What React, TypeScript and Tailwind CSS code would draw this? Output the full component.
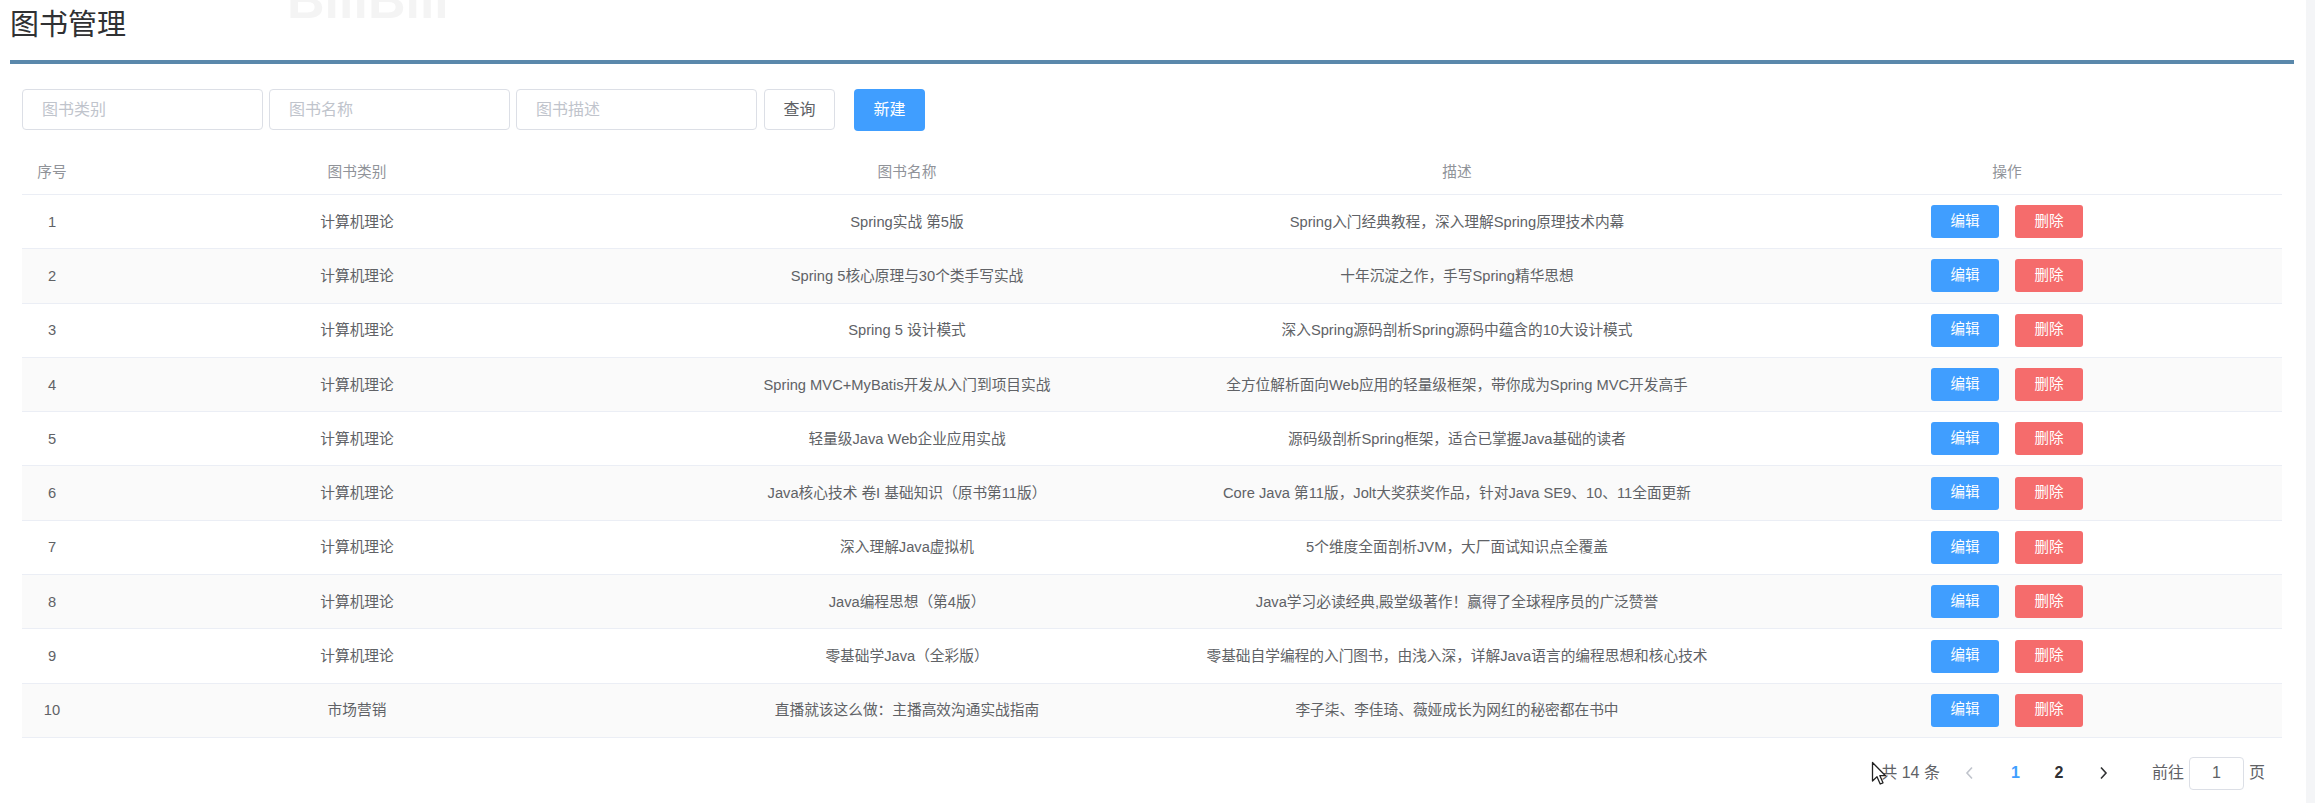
import React from "react";

type Book = { cat: string; name: string; desc: string };

const books: Book[] = [
  { cat: "计算机理论", name: "Spring实战 第5版", desc: "Spring入门经典教程，深入理解Spring原理技术内幕" },
  { cat: "计算机理论", name: "Spring 5核心原理与30个类手写实战", desc: "十年沉淀之作，手写Spring精华思想" },
  { cat: "计算机理论", name: "Spring 5 设计模式", desc: "深入Spring源码剖析Spring源码中蕴含的10大设计模式" },
  { cat: "计算机理论", name: "Spring MVC+MyBatis开发从入门到项目实战", desc: "全方位解析面向Web应用的轻量级框架，带你成为Spring MVC开发高手" },
  { cat: "计算机理论", name: "轻量级Java Web企业应用实战", desc: "源码级剖析Spring框架，适合已掌握Java基础的读者" },
  { cat: "计算机理论", name: "Java核心技术 卷I 基础知识（原书第11版）", desc: "Core Java 第11版，Jolt大奖获奖作品，针对Java SE9、10、11全面更新" },
  { cat: "计算机理论", name: "深入理解Java虚拟机", desc: "5个维度全面剖析JVM，大厂面试知识点全覆盖" },
  { cat: "计算机理论", name: "Java编程思想（第4版）", desc: "Java学习必读经典,殿堂级著作！赢得了全球程序员的广泛赞誉" },
  { cat: "计算机理论", name: "零基础学Java（全彩版）", desc: "零基础自学编程的入门图书，由浅入深，详解Java语言的编程思想和核心技术" },
  { cat: "市场营销", name: "直播就该这么做：主播高效沟通实战指南", desc: "李子柒、李佳琦、薇娅成长为网红的秘密都在书中" },
];

function Chevron({ dir, color }: { dir: "left" | "right"; color: string }) {
  return (
    <svg width="10" height="14" viewBox="0 0 10 14" fill="none">
      {dir === "left" ? (
        <polyline points="7,1.5 2,7 7,12.5" stroke={color} strokeWidth="1.6" fill="none" />
      ) : (
        <polyline points="3,1.5 8,7 3,12.5" stroke={color} strokeWidth="1.6" fill="none" />
      )}
    </svg>
  );
}

export default function App() {
  return (
    <div className="relative flex h-[803px] w-[2315px] overflow-hidden bg-white font-['Liberation_Sans','Noto_Sans_CJK_SC',sans-serif]">
      <div className="flex-1 pl-[10px] pr-[12px]">
        <h1 className="mt-[5px] h-[40px] text-[29px] font-normal leading-[40px] text-[#303133]">图书管理</h1>
        <div className="mt-[15px] h-[4px] bg-[#5a88ab]" />

        <div className="px-[12px]">
          {/* toolbar */}
          <div className="mt-[25px] flex h-[41px] items-center">
            <input
              readOnly
              placeholder="图书类别"
              className="h-[41px] w-[241px] rounded-[4px] border border-[#dcdfe6] px-[19px] text-[16px] text-[#606266] outline-none placeholder:text-[#c0c4cc]"
            />
            <input
              readOnly
              placeholder="图书名称"
              className="ml-[6px] h-[41px] w-[241px] rounded-[4px] border border-[#dcdfe6] px-[19px] text-[16px] text-[#606266] outline-none placeholder:text-[#c0c4cc]"
            />
            <input
              readOnly
              placeholder="图书描述"
              className="ml-[6px] h-[41px] w-[241px] rounded-[4px] border border-[#dcdfe6] px-[19px] text-[16px] text-[#606266] outline-none placeholder:text-[#c0c4cc]"
            />
            <button className="ml-[7px] flex h-[41px] w-[71px] items-center justify-center rounded-[4px] border border-[#dcdfe6] bg-white text-[16px] text-[#606266]">
              查询
            </button>
            <button className="ml-[19px] flex h-[42px] w-[71px] items-center justify-center rounded-[4px] bg-[#409eff] text-[16px] text-white">
              新建
            </button>
          </div>

          {/* table */}
          <div className="mt-[20px] text-[14.7px]">
            <div className="flex h-[45px] items-center border-b border-[#ebeef5] text-[#909399]">
              <div className="w-[60px] text-center">序号</div>
              <div className="w-[550px] text-center">图书类别</div>
              <div className="w-[550px] text-center">图书名称</div>
              <div className="w-[550px] text-center">描述</div>
              <div className="w-[550px] text-center">操作</div>
            </div>
            {books.map((b, i) => (
              <div
                key={i}
                className={
                  i % 2 === 1
                    ? "flex h-[54.3px] items-center border-b border-[#ebeef5] bg-[#fafafa] text-[#606266]"
                    : "flex h-[54.3px] items-center border-b border-[#ebeef5] bg-white text-[#606266]"
                }
              >
                <div className="w-[60px] text-center">{i + 1}</div>
                <div className="w-[550px] text-center">{b.cat}</div>
                <div className="w-[550px] text-center">{b.name}</div>
                <div className="w-[550px] text-center">{b.desc}</div>
                <div className="flex w-[550px] items-center justify-center gap-[16px]">
                  <button className="flex h-[33px] w-[68px] items-center justify-center rounded-[3px] bg-[#409eff] text-[14.5px] text-white">
                    编辑
                  </button>
                  <button className="flex h-[33px] w-[68px] items-center justify-center rounded-[3px] bg-[#f56c6c] text-[14.5px] text-white">
                    删除
                  </button>
                </div>
              </div>
            ))}
          </div>

          {/* pagination */}
          <div className="mt-[19px] flex h-[33px] items-center justify-end pr-[17px] text-[16px] text-[#606266]">
            <span>共 14 条</span>
            <div className="ml-[7px] flex h-[33px] w-[46px] items-center justify-center">
              <Chevron dir="left" color="#c0c4cc" />
            </div>
            <div className="flex h-[33px] w-[45px] items-center justify-center font-bold text-[#409eff]">1</div>
            <div className="flex h-[33px] w-[42px] items-center justify-center font-bold text-[#303133]">2</div>
            <div className="flex h-[33px] w-[46px] items-center justify-center">
              <Chevron dir="right" color="#303133" />
            </div>
            <span className="ml-[26px]">前往</span>
            <div className="ml-[5px] flex h-[33px] w-[55px] items-center justify-center rounded-[4px] border border-[#dcdfe6] text-[#606266]">
              1
            </div>
            <span className="ml-[5px]">页</span>
          </div>
        </div>
      </div>

      <div className="w-[9px] bg-[#f4f5f7]" />

      {/* watermark */}
      <div className="pointer-events-none absolute left-[287px] top-[-26px] select-none text-[52px] font-bold leading-none text-[#f4f4f4]">
        BiliBili
      </div>

      {/* mouse cursor */}
      <svg
        className="pointer-events-none absolute left-[1871px] top-[761px]"
        width="16"
        height="26"
        viewBox="0 0 16 26"
      >
        <path
          d="M1.5 1.5 L1.5 20 L6 15.8 L9.2 23 L12 21.8 L8.9 14.7 L14.5 14.7 Z"
          fill="#ffffff"
          stroke="#222222"
          strokeWidth="1.3"
          strokeLinejoin="round"
        />
      </svg>
    </div>
  );
}
